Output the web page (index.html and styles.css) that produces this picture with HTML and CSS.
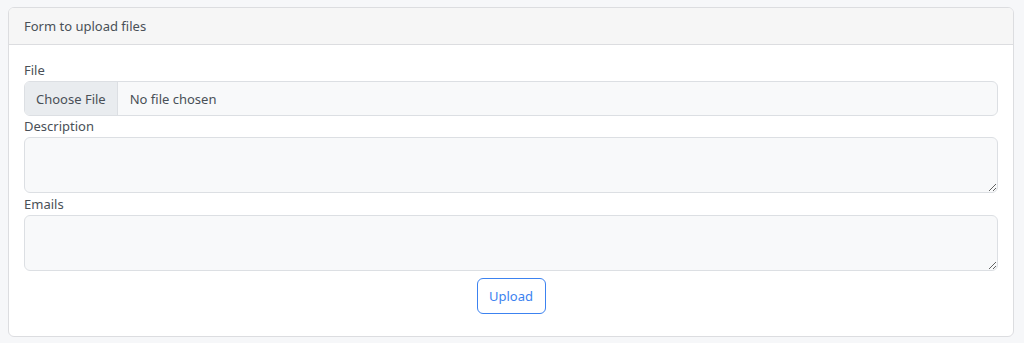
FILE: index.html
```html
<!DOCTYPE html>
<html lang="en">

<head>
    <meta charset="UTF-8">
    <meta name="viewport" content="width=device-width, initial-scale=1.0">
    <title>Upload</title>
    <link rel="stylesheet" href="styles.css">
</head>

<body>
    <div class="card">
        <div class="card-header">Form to upload files</div>
        <form class="card-body">
            <label for="file">File</label>
            <input type="file" id="file" class="form-control">

            <label for="description">Description</label>
            <textarea id="description" class="form-control"></textarea>

            <label for="emails">Emails</label>
            <textarea id="emails" class="form-control"></textarea>

            <div class="actions">
                <button type="submit" class="btn btn-outline">Upload</button>
            </div>
        </form>
    </div>
</body>

</html>
```

FILE: styles.css
```css
body {
    font-family: "Noto Sans", Arial, sans-serif;
    font-size: 13px;
    color: #495057;
    background-color: #f6f7f9;
    margin: 7px 10px 0 8px;
}

.card {
    background-color: #fff;
    border: 1px solid #dcdde0;
    border-radius: 6px;
    overflow: hidden;
}

.card-header {
    background-color: #f6f6f6;
    border-bottom: 1px solid #dcdde0;
    padding: 0 15px;
    height: 36px;
    line-height: 36px;
}

.card-body {
    display: flex;
    flex-direction: column;
    padding: 15px 15px 22px 15px;
}

label {
    line-height: 21px;
}

.form-control {
    box-sizing: border-box;
    width: 100%;
    margin: 0;
    font-family: inherit;
    font-size: 13px;
    color: #495057;
    background-color: #f8f9fa;
    border: 1px solid #dcdfe3;
    border-radius: 6px;
}

input.form-control {
    height: 35px;
    padding: 0 12px 0 0;
    overflow: hidden;
}

input.form-control::file-selector-button {
    height: 35px;
    margin: -1px 12px 0 0;
    padding: 0 11px;
    font-family: inherit;
    font-size: 13px;
    color: #495057;
    background-color: #e9ecef;
    border: none;
    border-right: 1px solid #dcdfe3;
    border-radius: 0;
}

textarea.form-control {
    height: 56px;
    margin-bottom: 1px;
    padding: 6px 12px;
    resize: vertical;
}

.actions {
    display: flex;
    justify-content: center;
    padding-top: 6px;
}

.btn {
    width: 69px;
    height: 36px;
    font-family: inherit;
    font-size: 13px;
    border-radius: 6px;
    cursor: pointer;
}

.btn-outline {
    background-color: #fff;
    color: #3c82f0;
    border: 1px solid #3c82f0;
}
```
